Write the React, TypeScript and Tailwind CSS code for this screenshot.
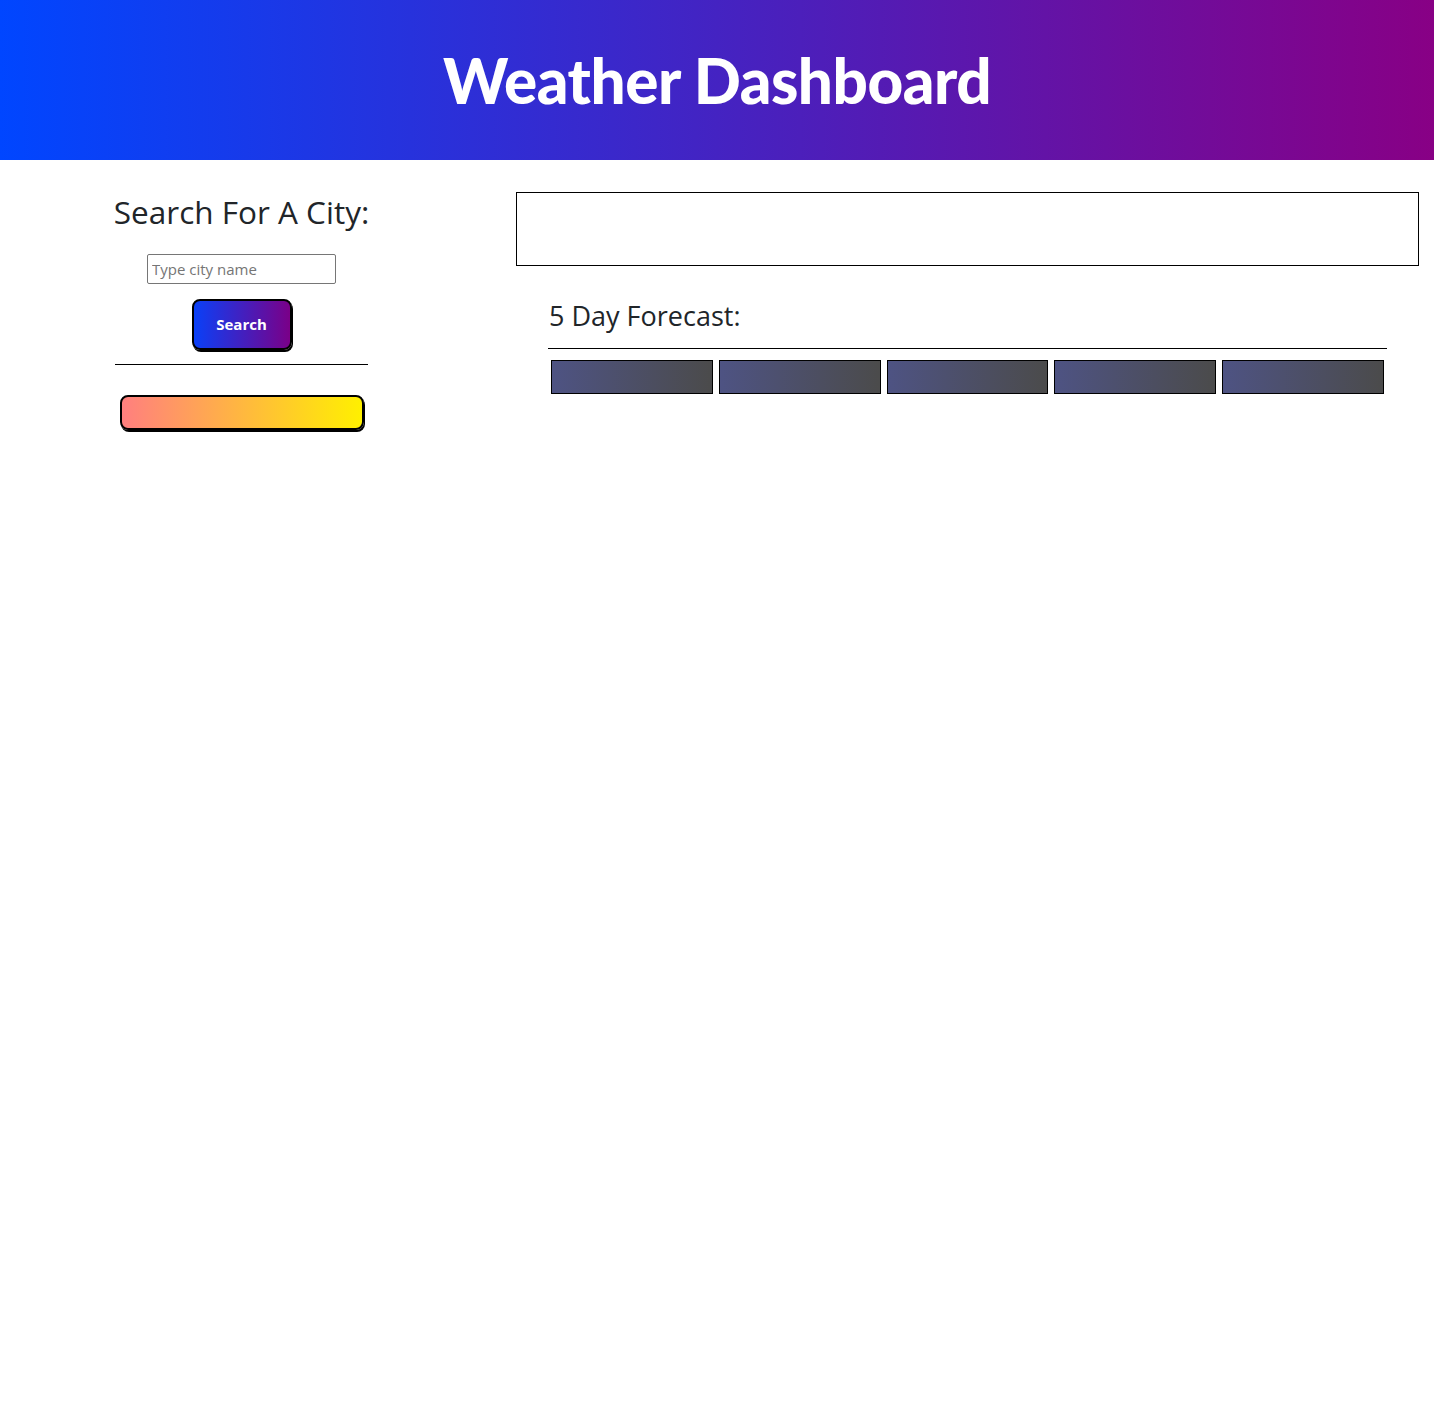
import { useState } from "react";

export default function App() {
  const [city, setCity] = useState("");

  return (
    <div className="min-h-screen bg-white text-[#212529] font-['Open_Sans',sans-serif]">
      <header className="h-[160px] flex items-center justify-center bg-linear-to-r/srgb from-[#0046ff] to-[#880085]">
        <h1 className="text-white text-[62px] leading-[1.1] font-black tracking-[-0.5px] font-['Lato',sans-serif]">Weather Dashboard</h1>
      </header>

      <main className="flex">
        <section className="w-[483px] flex flex-col items-center pt-[33px]">
          <h2 className="text-[31.5px] leading-[1.2] font-normal">Search For A City:</h2>
          <input
            type="text"
            value={city}
            onChange={(e) => setCity(e.target.value)}
            placeholder="Type city name"
            className="mt-[23px] w-[189px] h-[30px] border border-[#767676] rounded-[2px] px-[4px] text-[15px] placeholder:text-[#757575] outline-none"
          />
          <button className="mt-[15px] w-[100px] h-[51px] rounded-[8px] border-2 border-black text-white font-bold text-[15px] bg-linear-to-r/srgb from-[#0a40f7] to-[#7a0088] shadow-[1px_2px_0_#000]">
            Search
          </button>
          <hr className="mt-[14px] w-[253px] border-t border-black" />
          <div className="mt-[30px] w-[244px] h-[35px] rounded-[8px] border-2 border-black bg-linear-to-r/srgb from-[#ff7f7f] to-[#fff000] shadow-[1px_2px_0_#000]" />
        </section>

        <section className="flex-1 pr-[15px] pt-[32px] pl-[33px]">
          <div className="h-[74px] border border-black" />
          <div className="mx-[32px] mt-[34px]">
            <h3 className="text-[27px] leading-[1.2] pl-[1px]">5 Day Forecast:</h3>
            <hr className="mt-[16px] border-t border-black" />
            <div className="grid grid-cols-5 gap-[6px] px-[3px] mt-[11px]">
              {[0, 1, 2, 3, 4].map((i) => (
                <div key={i} className="h-[34px] border border-black bg-linear-to-r/srgb from-[#4e5383] to-[#4b4b4b]" />
              ))}
            </div>
          </div>
        </section>
      </main>
    </div>
  );
}
